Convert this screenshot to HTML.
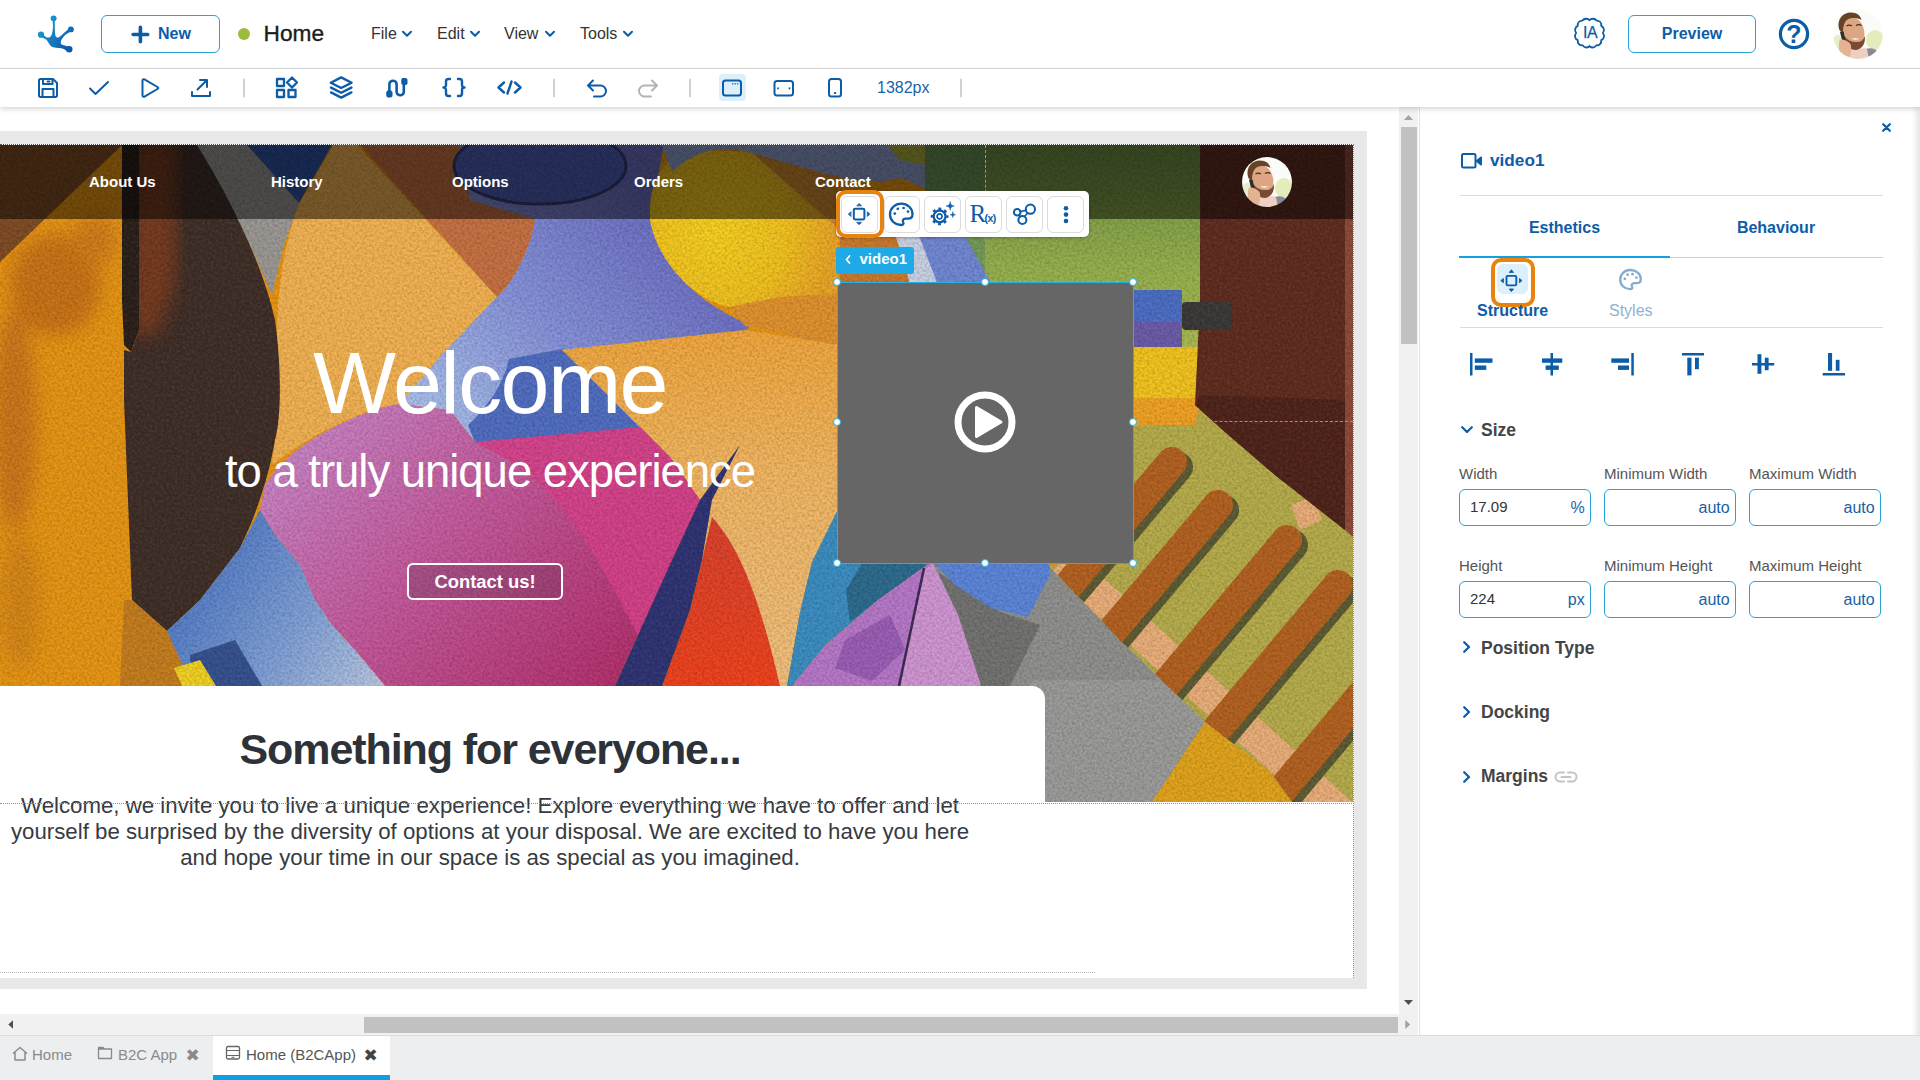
<!DOCTYPE html>
<html lang="en">
<head>
<meta charset="utf-8">
<title>Home (B2CApp)</title>
<style>
*{box-sizing:border-box;margin:0;padding:0}
html,body{width:1920px;height:1080px;overflow:hidden;background:#fff;font-family:"Liberation Sans",sans-serif;color:#333}
.abs{position:absolute}
#hdr{position:absolute;left:0;top:0;width:1920px;height:69px;background:#fff;border-bottom:1px solid #d9d9d9}
#tb{position:absolute;left:0;top:69px;width:1920px;height:38px;background:#fff;box-shadow:0 2px 5px rgba(0,0,0,.16);z-index:5}
.btn{position:absolute;border:1px solid #2aa3d6;border-radius:6px;background:#fff;color:#0d5ca8;font-weight:bold;font-size:16px;text-align:center}
.menu{position:absolute;top:24.700px;font-size:16px;color:#333;white-space:nowrap}
.ico{position:absolute;fill:none;stroke:#0d5ca8;stroke-width:2;stroke-linecap:round;stroke-linejoin:round;overflow:visible}
.sep{position:absolute;top:79px;width:2px;height:18px;background:#d4d4d4}
#work{position:absolute;left:0;top:107px;width:1399px;height:907px;background:#fff;overflow:hidden}
#vsb{position:absolute;left:1399px;top:107px;width:19px;height:907px;background:#f1f1f1}
#hsb{position:absolute;left:0;top:1014px;width:1418px;height:21px;background:#f1f1f1}
#panel{position:absolute;left:1419px;top:107px;width:501px;height:928px;background:#fff;border-left:1px solid #e2e2e2}
#tabs{position:absolute;left:0;top:1035px;width:1920px;height:45px;background:#edeef0;border-top:1px solid #dcdcdc}
.rf{font-family:"Liberation Sans",sans-serif}
</style>
</head>
<body>
<div id="hdr">
<svg class="abs" style="left:36px;top:14px" width="40" height="40" viewBox="0 0 40 40">
<defs><linearGradient id="lg" gradientUnits="userSpaceOnUse" x1="4" y1="10" x2="36" y2="34"><stop offset="0" stop-color="#1b9ad6"/><stop offset="1" stop-color="#0b58a6"/></linearGradient></defs>
<g fill="url(#lg)" stroke="none">
<circle cx="17.600" cy="4.350" r="2.950"/><circle cx="34.900" cy="15.400" r="2.950"/><circle cx="5" cy="20.700" r="3.100"/><circle cx="33.200" cy="35.200" r="3.300"/>
<path d="M16.600 6 C16.900 10 17 12 16.900 13.300 C16.800 16 16.500 18.500 15.900 20 C15.300 21.800 14.500 23 13.300 23.400 C12 23.800 11 23.500 9.900 22.900 L6.500 20 L5.500 23 L10.400 25.800 C11.500 27 12.300 28.500 13.300 30.100 C14.300 31.800 15.500 32.800 17.100 33.200 C19 33.800 21 34 22.900 34 C24.500 34 26 34.300 27.700 34.900 L32 37.500 L32.500 32.800 L27.200 31.100 C25.500 30.500 24.800 29.800 24.800 28.700 C24.700 27.500 25 26.400 25.800 25.300 C26.800 23.800 28 22.200 29.100 21 L34.500 17.500 L33 14.500 L29.600 17.600 C28 19 26.700 20.300 25.300 21.400 C24 22.500 22.800 23.600 21.400 23.600 C20.200 23.500 19.600 22.500 19.300 21 C18.900 18.500 18.800 16 18.800 13.300 L18.800 6 Z"/>
</g></svg>
<div class="btn" style="left:101px;top:15px;width:119px;height:38px;line-height:36px;text-align:left;padding-left:56px">New</div>
<svg class="abs" style="left:131px;top:25px" width="19" height="19" viewBox="0 0 19 19"><path d="M9.400 2.200 V16.800 M2.100 9.500 H16.700" stroke="#0d5ca8" stroke-width="3.600" stroke-linecap="round" fill="none"/></svg>
<div class="abs" style="left:238px;top:28px;width:12px;height:12px;border-radius:50%;background:#9dbc3c"></div>
<div class="abs" style="left:263.500px;top:19.500px;font-size:22.700px;line-height:26px;color:#1c1c1c;-webkit-text-stroke:.35px #1c1c1c">Home</div>
<div class="menu" style="left:371px">File</div><svg class="ico" style="left:402px;top:31px" width="10" height="6" viewBox="0 0 10 6"><path d="M1 .8 L5 4.8 L9 .8"/></svg>
<div class="menu" style="left:437px">Edit</div><svg class="ico" style="left:470px;top:31px" width="10" height="6" viewBox="0 0 10 6"><path d="M1 .8 L5 4.8 L9 .8"/></svg>
<div class="menu" style="left:504px">View</div><svg class="ico" style="left:545px;top:31px" width="10" height="6" viewBox="0 0 10 6"><path d="M1 .8 L5 4.8 L9 .8"/></svg>
<div class="menu" style="left:580px">Tools</div><svg class="ico" style="left:623px;top:31px" width="10" height="6" viewBox="0 0 10 6"><path d="M1 .8 L5 4.8 L9 .8"/></svg>
<!-- IA -->
<svg class="ico" style="left:1573px;top:17px;stroke-width:1.8" width="33" height="33" viewBox="0 0 33 33">
<path d="M16.5 3.2 C18 1.2 22 1.2 23.5 3.6 C26.5 3.4 28.8 5.8 28.2 8.8 C31 10 31.8 13.6 29.8 16 C32 18.4 31 22.2 28.2 23.2 C28.8 26.4 26.2 28.8 23.2 28.4 C21.8 31 18 31.2 16.5 29 C15 31.2 11.2 31 9.8 28.4 C6.8 28.8 4.2 26.4 4.8 23.2 C2 22.2 1 18.4 3.2 16 C1.2 13.6 2 10 4.8 8.8 C4.2 5.8 6.5 3.4 9.5 3.6 C11 1.2 15 1.2 16.5 3.2 Z"/>
</svg>
<div class="abs" style="left:1579px;top:24px;width:22px;text-align:center;font-size:16px;line-height:18px;color:#0d5ca8;letter-spacing:-.6px;-webkit-text-stroke:.25px #0d5ca8">IA</div>
<div class="btn" style="left:1628px;top:15px;width:128px;height:38px;line-height:36px">Preview</div>
<svg class="abs" style="left:1778px;top:18px" width="32" height="32" viewBox="0 0 32 32"><circle cx="16" cy="16" r="13.6" fill="none" stroke="#0d5ca8" stroke-width="3.2"/></svg>
<div class="abs" style="left:1778px;top:19.500px;width:32px;text-align:center;font-size:25px;line-height:28px;font-weight:bold;color:#0d5ca8">?</div>
<svg class="abs" style="left:1833px;top:9px" width="50" height="50" viewBox="0 0 50 50">
<defs><clipPath id="avc"><circle cx="25" cy="25" r="25"/></clipPath>
<filter id="avb"><feGaussianBlur stdDeviation=".7"/></filter>
<g id="avatar" clip-path="url(#avc)"><g filter="url(#avb)">
<rect width="50" height="50" fill="#fbfbf8"/>
<ellipse cx="42" cy="31" rx="9" ry="10" fill="#e4ecbc"/>
<ellipse cx="5" cy="33" rx="5" ry="7" fill="#e6edc8"/>
<path d="M18 40 L36 39 L38 50 L16 50 Z" fill="#ecd0c4"/>
<path d="M34 40 C39 38 44 40 46 45 L44 50 L36 50 Z" fill="#868c97"/>
<ellipse cx="20" cy="23.500" rx="11.300" ry="15.300" transform="rotate(-8 20 23.500)" fill="#dca684"/>
<path d="M11.500 27 C12 36 16 41 23 41 C29 40 32.500 35 32 27 C30 32 27 33.500 23 33 C18 33 14 31 11.500 27 Z" fill="#7a4a30"/>
<path d="M18 29.800 C20.500 28.800 24 28.800 26.500 29.800 C24.500 31.300 20.500 31.300 18 29.800 Z" fill="#f1e4dc"/>
<path d="M6 20 C3.500 10 10 3.500 18 3.500 C24 3.500 27.500 6.500 28.500 11 C24 8.500 18.500 8.500 14.500 10.500 C11 13 10 18 10 24 C8 23 6.800 22 6 20 Z" fill="#664228"/>
<path d="M13.500 17 C15 16 17.500 16 19 17 M23 16.500 C24.500 15.500 27 15.500 28.500 16.500" stroke="#4a2e1c" stroke-width="1.300" fill="none"/>
<path d="M7 23 L10.500 22.500 L13 33 L10 35 Z" fill="#2e2e2e"/>
<path d="M6.500 31 C9 29.500 14 31 17.500 35 C19 39 18 45 16 49 L6 47 C6 41 5.500 35 6.500 31 Z" fill="#e3b494"/>
</g></g></defs>
<use href="#avatar"/></svg>
</div>
<div id="tb"></div>
<div class="abs" style="left:0;top:69px;width:1920px;height:38px;z-index:6">
<!-- coords relative to page top: subtract 69 -->
<svg class="abs" style="left:0;top:0" width="980" height="38" viewBox="0 69 980 38" fill="none" stroke="#0d5ca8" stroke-width="2" stroke-linecap="round" stroke-linejoin="round">
<!-- save -->
<path d="M39 80.5 a1.5 1.5 0 0 1 1.500 -1.500 H53 L57 83 V95.500 a1.500 1.500 0 0 1 -1.500 1.500 H40.500 a1.500 1.500 0 0 1 -1.500 -1.500 Z"/>
<path d="M43 79 V84 H52.500 V79.500 M47.500 81.500 H49.500"/>
<path d="M42.500 97 V89 H53.500 V97"/>
<!-- check -->
<path d="M90 88.500 L95.500 94 L108 82"/>
<!-- play -->
<path d="M142.500 80.500 C142.500 79.300 143.500 78.800 144.500 79.400 L157.500 87 C158.500 87.600 158.500 88.400 157.500 89 L144.500 96.600 C143.500 97.200 142.500 96.700 142.500 95.500 Z"/>
<!-- export -->
<path d="M192 92 V96 H210 V92"/>
<path d="M197.500 89.500 L207 80 M200 80 H207 V87"/>
<!-- sep -->
<path d="M244 79.500 V96.500" stroke="#d0d0d0"/>
<!-- grid -->
<path d="M277 79 H284 V86 H277 Z M277 90 H284 V97 H277 Z M288.500 90 H295.500 V97 H288.500 Z M292 77.500 L297 82.500 L292 87.500 L287 82.500 Z" stroke-width="2.300"/>
<!-- layers -->
<path d="M341.200 77.400 L351.600 82.700 L341.200 88 L330.800 82.700 Z" stroke-width="2.400"/>
<path d="M331 87.600 L341.200 92.800 L351.400 87.600 M331 92.400 L341.200 97.600 L351.400 92.400" stroke-width="2.400"/>
<!-- route -->
<path d="M389.400 92 V84.300 a3.600 3.600 0 0 1 7.200 0 V91.700 a3.600 3.600 0 0 0 7.200 0 V84" stroke-width="2.600"/>
<rect x="386.800" y="91" width="5.200" height="6" rx="1.200" fill="#0d5ca8" stroke-width="1"/>
<rect x="401.800" y="78.500" width="5.200" height="6" rx="1.200" fill="#0d5ca8" stroke-width="1"/>
<!-- braces -->
<path d="M450 79 H448.500 a2.500 2.500 0 0 0 -2.500 2.500 V85 a2.500 2.500 0 0 1 -2.500 2.500 a2.500 2.500 0 0 1 2.500 2.500 V93.500 a2.500 2.500 0 0 0 2.500 2.500 H450" stroke-width="2.400"/>
<path d="M458 79 H459.500 a2.500 2.500 0 0 1 2.500 2.500 V85 a2.500 2.500 0 0 0 2.500 2.500 a2.500 2.500 0 0 0 -2.500 2.500 V93.500 a2.500 2.500 0 0 1 -2.500 2.500 H458" stroke-width="2.400"/>
<!-- code -->
<path d="M504 82.500 L498.500 87.500 L504 92.500 M515 82.500 L520.500 87.500 L515 92.500 M511.500 81.500 L507.500 93.500" stroke-width="2.400"/>
<path d="M554 79.500 V96.500" stroke="#d0d0d0"/>
<!-- undo -->
<path d="M593 80.500 L588 85.500 L593 90.500 M588.500 85.500 H600.500 a5.500 5.500 0 0 1 0 11 H594"/>
<!-- redo -->
<path d="M652 80.500 L657 85.500 L652 90.500 M656.500 85.500 H644.500 a5.500 5.500 0 0 0 0 11 H651" stroke="#b3b3b3"/>
<path d="M690 79.500 V96.500" stroke="#d0d0d0"/>
<!-- desktop -->
<rect x="719" y="74" width="27" height="27" rx="4" fill="#dceffa" stroke="none"/>
<rect x="723" y="80.500" width="18" height="15" rx="2.500"/>
<path d="M732.500 83.800 h.4 M735 83.800 h.4 M737.500 83.800 h.4" stroke-width="1.300"/>
<!-- tablet -->
<rect x="774.500" y="81" width="18.500" height="14.500" rx="2.500"/>
<path d="M778 88.200 v.3 M789.500 88.200 v.3" stroke-width="1.800"/>
<!-- phone -->
<rect x="829" y="79" width="12" height="17.500" rx="2.500"/>
<path d="M834.700 93 h.6" stroke-width="1.800"/>
<path d="M961 79.500 V96.500" stroke="#d0d0d0"/>
</svg>
<div class="abs" style="left:877px;top:9px;font-size:16px;line-height:20px;color:#1a63a8">1382px</div>
</div>
<div id="work">
<!-- page frame (coords relative to #work: page y - 107) -->
<div class="abs" style="left:0;top:24px;width:1367px;height:858px;background:#e8e8e8"></div>
<div class="abs" style="left:0;top:37px;width:1354px;height:834px;background:#fff"></div>
<svg class="abs" id="paint" style="left:0;top:38px" width="1353" height="657" viewBox="0 145 1353 657" preserveAspectRatio="none">
<defs>
<linearGradient id="gBrown" x1="139" y1="0" x2="185" y2="0" gradientUnits="userSpaceOnUse"><stop offset="0" stop-color="#6e3620"/><stop offset="1" stop-color="#3b2b25"/></linearGradient>
<linearGradient id="gRedBr" x1="139" y1="0" x2="196" y2="0" gradientUnits="userSpaceOnUse"><stop offset="0" stop-color="#7a3a1e"/><stop offset=".5" stop-color="#7a3a1e" stop-opacity=".7"/><stop offset="1" stop-color="#5a3020" stop-opacity="0"/></linearGradient>
<linearGradient id="gPink" x1="300" y1="420" x2="600" y2="700" gradientUnits="userSpaceOnUse"><stop offset="0" stop-color="#c884c6"/><stop offset=".45" stop-color="#c4589c"/><stop offset="1" stop-color="#b22e6c"/></linearGradient>
<linearGradient id="gBlueTri" x1="200" y1="560" x2="380" y2="680" gradientUnits="userSpaceOnUse"><stop offset="0" stop-color="#4f78c4"/><stop offset=".55" stop-color="#7f9fd6"/><stop offset="1" stop-color="#b4c4e0"/></linearGradient>
<linearGradient id="gPeach" x1="0" y1="330" x2="0" y2="686" gradientUnits="userSpaceOnUse"><stop offset="0" stop-color="#f0a53a"/><stop offset=".4" stop-color="#f1b560"/><stop offset="1" stop-color="#f0be7c"/></linearGradient>
<linearGradient id="gGreen" x1="0" y1="145" x2="0" y2="410" gradientUnits="userSpaceOnUse"><stop offset="0" stop-color="#68893f"/><stop offset=".45" stop-color="#93ae4b"/><stop offset="1" stop-color="#b9bf55"/></linearGradient>
<linearGradient id="gBlueFig" x1="650" y1="200" x2="420" y2="420" gradientUnits="userSpaceOnUse"><stop offset="0" stop-color="#6a6cc0"/><stop offset=".5" stop-color="#8490d8"/><stop offset="1" stop-color="#a9c0ea"/></linearGradient>
<linearGradient id="gRed" x1="0" y1="517" x2="0" y2="690" gradientUnits="userSpaceOnUse"><stop offset="0" stop-color="#d8402c"/><stop offset="1" stop-color="#f0401a"/></linearGradient>
<radialGradient id="gYel" cx="715" cy="230" r="120" gradientUnits="userSpaceOnUse"><stop offset="0" stop-color="#f6d01e"/><stop offset=".6" stop-color="#f0c01c"/><stop offset="1" stop-color="#e8a424"/></radialGradient>
<filter id="tex" x="0" y="0" width="100%" height="100%"><feTurbulence type="fractalNoise" baseFrequency=".4" numOctaves="2" seed="7"/><feColorMatrix type="matrix" values="0 0 0 0 0  0 0 0 0 0  0 0 0 0 0  1.1 0 0 0 -.38"/></filter>
<filter id="tex2" x="0" y="0" width="100%" height="100%"><feTurbulence type="fractalNoise" baseFrequency=".36" numOctaves="2" seed="23"/><feColorMatrix type="matrix" values="0 0 0 0 1  0 0 0 0 1  0 0 0 0 1  .9 0 0 0 -.36"/></filter>
<filter id="soft"><feGaussianBlur stdDeviation="9"/></filter>
<clipPath id="cLeaf"><path d="M139 145 L197 145 C225 190 262 260 275 320 C282 370 281 420 275 440 C268 480 256 515 240 548 L200 600 L167 631 L132 600 L124 400 L124 350 L131 352 L139 330 Z"/></clipPath>
<clipPath id="cStripes"><polygon points="1134,400 1353,400 1353,802 1292,802 1270,772 1205,722 1120,640 1050,567 1050,560 1134,560"/></clipPath>
</defs>
<rect x="0" y="145" width="1353" height="657" fill="#e69412"/>
<!-- left mottling -->
<g filter="url(#soft)" opacity=".6">
<ellipse cx="55" cy="285" rx="45" ry="50" fill="#b45a18"/>
<ellipse cx="14" cy="420" rx="22" ry="110" fill="#b8601a"/>
<ellipse cx="20" cy="600" rx="20" ry="70" fill="#c87a18"/>
<ellipse cx="95" cy="240" rx="22" ry="25" fill="#c06a1a"/>
</g>
<polygon points="0,145 122,145 0,262" fill="#7d4a22"/>
<!-- gray wedge + blue top -->
<polygon points="190,145 247,145 299,203 284,245 272,295 250,245 217,190" fill="#9a9692"/>
<polygon points="247,145 332,145 299,203" fill="#2c50a0"/>
<!-- centre orange lighter -->
<path d="M334 145 L299 204 C283 250 272 300 279 400 L272 465 C310 435 360 410 400 404 L444 352 L497 297 L357 145 Z" fill="#f1b050"/>
<!-- terracotta -->
<path d="M360 145 L470 145 L470 200 L535 205 L535 219 C530 250 515 280 497 297 Z" fill="#c46f40"/>
<!-- big brown shape -->
<polygon points="122,145 139,145 139,330 131,352 124,345 122,300" fill="#2a1e18"/>
<path d="M139 145 L197 145 C225 190 262 260 275 320 C282 370 281 420 275 440 C268 480 256 515 240 548 L200 600 L167 631 L132 600 L124 400 L124 350 L131 352 L139 330 Z" fill="#3e2d26"/>
<g clip-path="url(#cLeaf)"><polygon points="130,140 178,140 176,280 158,335 130,335" fill="#7a3a1e" filter="url(#soft)" opacity=".9"/></g>
<polygon points="132,600 167,631 192,686 120,686 124,600" fill="#c47c1c"/>
<!-- blue figure -->
<path d="M460 145 L664 145 L650 219 C655 250 680 295 750 325 L745 332 L562 350 L640 427 L600 432 L475 442 L450 410 L400 404 L444 352 L497 297 C515 280 530 250 535 219 L470 200 Z" fill="url(#gBlueFig)"/>
<path d="M562 349 L657 445 L484 466 L468 425 C490 405 505 380 509 359 Z" fill="#4f6cc0"/>
<ellipse cx="540" cy="166" rx="86" ry="38" fill="#4b5ab2" stroke="#2f376e" stroke-width="3"/>
<!-- light blue band top + yellow circle -->
<path d="M650 219 C648 180 665 152 700 150 L749 152 L838 150 L838 294 L780 297 L730 307 C690 300 655 255 650 219 Z" fill="url(#gYel)"/>
<polygon points="749,150 838,150 838,228" fill="#c8822c" opacity=".92"/>
<polygon points="730,307 780,297 838,294 838,352 780,332 745,326" fill="#df902c"/>
<path d="M662 145 L930 145 L930 190 L900 178 C860 190 800 165 740 150 C710 146 690 155 672 172 Z" fill="#8c9ccc"/>
<polygon points="887,145 930,145 930,166 900,160" fill="#a8a838"/>
<!-- green -->
<rect x="925" y="145" width="277" height="265" fill="url(#gGreen)"/>
<polygon points="925,145 985,145 985,290 925,290" fill="#5c8a5e" opacity=".55"/>
<polygon points="840,200 900,200 935,290 840,290" fill="#c8782a"/>
<polygon points="905,200 945,200 995,290 935,290" fill="#6f86d2"/>
<polygon points="885,200 905,200 940,290 912,290" fill="#c9d1e4"/>
<!-- right of video -->
<rect x="1134" y="347" width="66" height="63" fill="#f2c21c"/>
<rect x="1134" y="398" width="66" height="30" fill="#f0a122"/>
<rect x="1134" y="290" width="48" height="57" fill="#4a6cc4"/>
<rect x="1134" y="322" width="48" height="25" fill="#6a5aa8"/>
<!-- peach big -->
<path d="M562 350 L745 330 L840 345 L840 520 L812 562 L800 612 L787 686 L700 686 L700 500 L640 427 Z" fill="url(#gPeach)"/>
<!-- pink -->
<path d="M265 485 C280 462 300 445 325 432 C350 418 380 406 400 404 L450 410 L475 442 L600 432 L640 427 L670 457 L700 500 L672 560 L615 686 L385 686 L355 650 L332 625 L315 600 L300 565 L275 535 L260 510 Z" fill="url(#gPink)"/>
<path d="M475 442 L640 427 L670 457 L700 500 L672 560 L640 640 C600 560 560 490 512 462 Z" fill="#d6408a" opacity=".9"/>
<!-- blue triangle bottom-left -->
<path d="M260 510 L275 535 L300 565 L315 600 L332 625 L355 650 L385 686 L192 686 L167 631 L200 600 L240 548 Z" fill="url(#gBlueTri)"/>
<polygon points="190,655 235,640 262,686 192,686" fill="#34508e"/>
<polygon points="174,668 200,660 216,686 182,686" fill="#f0d020"/>
<!-- navy + red -->
<path d="M712 517 C737 545 757 587 780 686 L662 686 L690 610 L702 560 Z" fill="url(#gRed)"/>
<polygon points="740,445 712,500 702,560 690,610 662,686 615,686 672,560 700,500" fill="#2e3272"/>
<!-- gray concrete -->
<polygon points="928,563 1050,567 1120,640 1205,722 1152,802 960,802 978,686 955,615" fill="#8f8f8d"/>
<polygon points="938,572 958,615 981,686 1010,686 1040,625 1000,612" fill="#646464" opacity=".7"/>
<polygon points="1030,680 1164,680 1205,722 1152,802 1030,802" fill="#9a9a98"/>
<!-- teal + lilac -->
<polygon points="840,505 840,563 929.500,563 878,600 825,645.600 792,686 787,686 800,612 812,562" fill="#3a8cc0"/>
<polygon points="862,563 929.500,563 878,600 850,622 846,590" fill="#2b6a8c"/>
<polygon points="929.500,563 932.500,563 958,615 981,686 792,686 825,645.600 878,600" fill="#b676c8"/>
<polygon points="925,570 932.500,563 958,615 981,686 899,686" fill="#cf94d2"/>
<polygon points="845,640 890,615 905,650 872,681 835,668" fill="#9054ae" opacity=".75"/>
<path d="M924 568 L899 686" stroke="#3a2a50" stroke-width="2.500"/>
<polygon points="934,563 1049,563 1050,575 1027.700,617 991.500,608 955,585" fill="#5a84d8"/>
<!-- olive right -->
<polygon points="1134,425 1353,425 1353,802 1292,802 1270,772 1205,722 1120,640 1050,567 1060,563 1134,563" fill="#b5ab4a"/>
<polygon points="1134,410 1200,410 1353,540 1353,802 1300,802 1134,563" fill="#b5ab4a"/>
<g clip-path="url(#cStripes)">
<!-- peach band (under stripes) -->
<polygon points="1050.700,573.500 1072.100,549.700 1361.800,810.600 1340.400,834.400" fill="#e9ad78"/>
<!-- stripe shadows -->
<g stroke="#5b5a32" stroke-width="30" stroke-linecap="round" fill="none" transform="translate(6,3)">
<path d="M1172 464 L1000 669"/><path d="M1218 507 L1050 707"/><path d="M1287 542 L1100 765"/><path d="M1338 587 L1150 811"/><path d="M1406 644 L1230 854"/>
</g>
<!-- stripes -->
<g stroke="#b2601f" stroke-width="30" stroke-linecap="round" fill="none">
<path d="M1172 462 L1000 667"/><path d="M1218 505 L1050 705"/><path d="M1287 540 L1100 763"/><path d="M1338 585 L1150 809"/><path d="M1406 642 L1230 852"/>
</g>
<polygon points="1291,505 1312,497 1322,520 1300,530" fill="#e9ad78"/>
</g>
<polygon points="1205,722 1270,772 1292,802 1152,802" fill="#e0a21a"/>
<polygon points="1134,398 1200,398 1195,425 1134,425" fill="#f0a122"/>
<!-- brown band right -->
<polygon points="1200,145 1345,145 1345,530 1275,475 1225,432 1195,405 1200,300" fill="#5e2b1e"/>
<polygon points="1195,405 1225,432 1275,475 1345,530 1345,400 1200,395" fill="#4e2219"/>
<polygon points="1345,145 1353,145 1353,537 1345,530" fill="#8c4838"/>
<rect x="1182" y="302" width="50" height="28" rx="4" fill="#3a3836"/>
<!-- texture -->
<rect x="0" y="145" width="1353" height="657" filter="url(#tex)" opacity=".32"/>
<rect x="0" y="145" width="1353" height="657" filter="url(#tex2)" opacity=".16"/>
<!-- nav overlay -->
<rect x="0" y="145" width="1353" height="74" fill="#000" opacity=".5"/>
</svg>
<!-- overlays; coords relative to #work (page y-107) -->
<style>
.nav{position:absolute;top:66px;font-size:15px;line-height:18px;font-weight:bold;color:#fff;white-space:nowrap}
.hdl{position:absolute;width:8px;height:8px;border-radius:50%;background:#fff;border:1.5px solid #27b0e6}
.fbtn{position:absolute;top:89px;width:37px;height:37px;border:1px solid #dcdcdc;border-radius:6px;background:#fff}
</style>
<div class="nav" style="left:89px">About Us</div>
<div class="nav" style="left:271px">History</div>
<div class="nav" style="left:452px">Options</div>
<div class="nav" style="left:634px">Orders</div>
<div class="nav" style="left:815px">Contact</div>
<div class="abs" id="welcome" style="left:0;top:226.250px;width:980px;text-align:center;font-size:88px;letter-spacing:-1.600px;line-height:100px;color:#fff;white-space:nowrap">Welcome</div>
<div class="abs" id="sub" style="left:0;top:339.100px;width:980px;text-align:center;font-size:45.500px;letter-spacing:-1.030px;line-height:52px;color:#fff;white-space:nowrap">to a truly unique experience</div>
<div class="abs" id="cbtn" style="left:407px;top:456px;width:156px;height:37px;border:2px solid #fff;border-radius:6px;background:rgba(70,50,70,.22);color:#fff;font-weight:bold;font-size:18.4px;line-height:33px;text-align:center;white-space:nowrap">Contact us!</div>
<!-- white card -->
<div class="abs" style="left:0;top:579px;width:1045px;height:140px;background:#fff;border-top-right-radius:13px"></div>
<div class="abs" id="h2" style="left:0;top:617.850px;width:980px;text-align:center;font-size:43px;letter-spacing:-1.080px;line-height:48px;font-weight:bold;color:#2d3238;white-space:nowrap">Something for everyone...</div>
<div class="abs" id="para" style="left:0;top:686px;width:980px;text-align:center;font-size:22.25px;line-height:26px;color:#363b41;white-space:nowrap">Welcome, we invite you to live a unique experience! Explore everything we have to offer and let<br>yourself be surprised by the diversity of options at your disposal. We are excited to have you here<br>and hope your time in our space is as special as you imagined.</div>
<!-- dotted guides -->
<div class="abs" style="left:0;top:37px;width:1354px;height:0;border-top:1px dotted #555"></div>
<div class="abs" style="left:1353px;top:37px;width:0;height:834px;border-left:1px dotted #8a8a8a"></div>
<div class="abs" style="left:0;top:696px;width:1354px;height:0;border-top:1px dotted #8f8f8f"></div>
<div class="abs" style="left:0;top:865px;width:1095px;height:0;border-top:1px dotted #b5b5b5"></div>
<!-- cyan dashed guides -->
<div class="abs" style="left:985px;top:38px;width:0;height:137px;border-left:1px dashed #35b6e8"></div>
<div class="abs" style="left:1134px;top:314px;width:219px;height:0;border-top:1px dashed #35b6e8"></div>
<!-- nav avatar -->
<svg class="abs" style="left:1242px;top:50px" width="50" height="50" viewBox="0 0 50 50"><use href="#avatar"/></svg>
<!-- video box -->
<div class="abs" style="left:837px;top:175px;width:297px;height:282px;background:#666;border:1px solid #27b0e6"></div>
<svg class="abs" style="left:953px;top:283px" width="64" height="64" viewBox="0 0 64 64"><circle cx="32" cy="32" r="27" fill="none" stroke="#fff" stroke-width="7"/><path d="M23.500 17.500 L48 32 L23.500 46.500 Z" fill="#fff" stroke="#fff" stroke-width="3" stroke-linejoin="round"/></svg>
<div class="hdl" style="left:833px;top:171px"></div><div class="hdl" style="left:981px;top:171px"></div><div class="hdl" style="left:1129px;top:171px"></div>
<div class="hdl" style="left:833px;top:311px"></div><div class="hdl" style="left:1129px;top:311px"></div>
<div class="hdl" style="left:833px;top:452px"></div><div class="hdl" style="left:981px;top:452px"></div><div class="hdl" style="left:1129px;top:452px"></div>
<!-- label -->
<div class="abs" style="left:836px;top:140px;width:78px;height:27px;background:#1eaae6;border-radius:3px;color:#fff;font-weight:bold;font-size:15px;line-height:23px;padding-left:23.500px">video1</div>
<svg class="abs" style="left:845px;top:148px" width="6" height="9" viewBox="0 0 6 9"><path d="M4.500 1 L1.500 4.500 L4.500 8" fill="none" stroke="#fff" stroke-width="1.800" stroke-linecap="round" stroke-linejoin="round"/></svg>
<!-- floating toolbar -->
<div class="abs" style="left:836px;top:83.500px;width:253px;height:46.500px;background:#fff;border-radius:5px;box-shadow:0 1px 3px rgba(0,0,0,.28)"></div>
<div class="fbtn" style="left:841px"></div><div class="fbtn" style="left:883.500px;width:36px"></div><div class="fbtn" style="left:923.500px"></div><div class="fbtn" style="left:964.500px"></div><div class="fbtn" style="left:1005.500px"></div><div class="fbtn" style="left:1047px"></div>
<div class="abs" style="left:836px;top:83px;width:48px;height:48px;border:4px solid #e8830f;border-radius:10px"></div>
<svg class="abs" style="left:836px;top:83px" width="253" height="48" viewBox="836 190 253 48" fill="none" stroke="#0d5ca8" stroke-width="2" stroke-linecap="round" stroke-linejoin="round">
<!-- move -->
<rect x="853.800" y="208.800" width="10.600" height="10.600" rx="1.300"/>
<path d="M857 205.600 L859.100 203.500 L861.200 205.600 Z M857 222.600 L859.100 224.700 L861.200 222.600 Z M850.600 212 L848.500 214.100 L850.600 216.200 Z M867.600 212 L869.700 214.100 L867.600 216.200 Z" fill="#0d5ca8" stroke-width=".9"/>
<!-- palette -->
<path d="M901.300 203.600 C895 203.600 890 208.400 890 214.400 C890 220.600 895.200 225 901.200 225 C903.300 225 903.900 223.500 903.200 222.200 C902.200 220.400 903.200 218.600 905.400 218.600 L907.800 218.600 C910.600 218.600 912.500 216.800 912.500 214.200 C912.500 208.400 907.600 203.600 901.300 203.600 Z" stroke-width="2.300"/>
<g fill="#0d5ca8" stroke="none"><circle cx="894.800" cy="213.600" r="1.350"/><circle cx="897.800" cy="208.800" r="1.350"/><circle cx="903.600" cy="208" r="1.350"/><circle cx="908" cy="211.600" r="1.350"/></g>
<!-- gear + sparkles -->
<g transform="translate(939.600 216.400)"><circle r="7.500" stroke-width="2.800" stroke-dasharray="2.750 3.140" stroke-dashoffset="1.370" stroke-linecap="butt"/><circle r="5.900" stroke-width="2.300"/><circle r="2.500" stroke-width="1.700"/></g>
<path d="M950.200 201.800 C950.700 204.800 951.300 205.500 954.400 206 C951.300 206.500 950.700 207.200 950.200 210.200 C949.700 207.200 949.100 206.500 946 206 C949.100 205.500 949.700 204.800 950.200 201.800 Z M952.800 212 C953.100 214 953.500 214.400 955.600 214.800 C953.500 215.200 953.100 215.600 952.800 217.600 C952.500 215.600 952.100 215.200 950 214.800 C952.100 214.400 952.500 214 952.800 212 Z" fill="#0d5ca8" stroke-width=".5"/>
<!-- circles -->
<circle cx="1030.400" cy="209.200" r="4.600"/><circle cx="1017.200" cy="212.300" r="3.300"/><circle cx="1022.400" cy="220" r="4"/>
<path d="M1020.200 211.500 L1026 210.400 M1018.800 215.200 L1020.400 216.800 M1024.600 216.600 L1027.600 213" stroke-width="1.600"/>
<!-- dots -->
<g fill="#0d5ca8" stroke="none"><circle cx="1066" cy="208.200" r="2.300"/><circle cx="1066" cy="214.600" r="2.300"/><circle cx="1066" cy="221" r="2.300"/></g>
</svg>
<div class="abs" style="left:969.500px;top:93px;font-family:'Liberation Serif',serif;font-size:25px;line-height:28px;color:#0d5ca8;letter-spacing:-1px">R</div>
<div class="abs" style="left:984.500px;top:105px;font-size:10.500px;line-height:12px;color:#0d5ca8;font-weight:bold;letter-spacing:-.5px">(x)</div>
</div>
<div id="vsb">
<div class="abs" style="left:2px;top:20px;width:16px;height:217px;background:#c1c1c1"></div>
<svg class="abs" style="left:5px;top:8px" width="9" height="5" viewBox="0 0 9 5"><path d="M0 5 L4.500 0 L9 5 Z" fill="#a3a3a3"/></svg>
<svg class="abs" style="left:5px;top:893px" width="9" height="5" viewBox="0 0 9 5"><path d="M0 0 L4.500 5 L9 0 Z" fill="#505050"/></svg>
</div>
<div id="hsb">
<div class="abs" style="left:364px;top:2.500px;width:1034px;height:16px;background:#c1c1c1"></div>
<svg class="abs" style="left:7.500px;top:6px" width="5.500" height="9" viewBox="0 0 5 9"><path d="M5 0 L0 4.500 L5 9 Z" fill="#505050"/></svg>
<svg class="abs" style="left:1405px;top:6px" width="5.500" height="9" viewBox="0 0 5 9"><path d="M0 0 L5 4.500 L0 9 Z" fill="#a3a3a3"/></svg>
</div>
<style>
#panel .t{position:absolute;white-space:nowrap}
#panel .lbl{position:absolute;font-size:15px;line-height:18px;color:#555;white-space:nowrap}
#panel .inp{position:absolute;width:132px;height:37px;border:1px solid #2aa3d6;border-radius:6px;background:#fff}
#panel .val{position:absolute;margin-top:-.8px;font-size:15px;line-height:18px;color:#333}
#panel .unit{position:absolute;margin-top:.8px;margin-left:-1.300px;font-size:16px;line-height:18px;color:#1a5fa6;text-align:right;width:60px}
#panel .sec{position:absolute;margin-top:.7px;font-size:17.500px;line-height:20px;font-weight:bold;color:#434548;white-space:nowrap}
#panel .hr{position:absolute;left:40px;width:423px;height:1px;background:#dcdcdc}
</style>
<div id="panel">
<!-- coords relative to panel: x-1420, y-107 -->
<svg class="abs" style="left:462px;top:16px" width="9" height="9" viewBox="0 0 9 9"><path d="M1.200 1.200 L7.800 7.800 M7.800 1.200 L1.200 7.800" stroke="#0d5ca8" stroke-width="2.200" stroke-linecap="round"/></svg>
<svg class="abs" style="left:40px;top:44px" width="24" height="20" viewBox="0 0 24 20" fill="none" stroke="#0d5ca8" stroke-width="2" stroke-linejoin="round"><rect x="2" y="3" width="13.500" height="13.500" rx="1.500"/><path d="M17 9.800 L21 6.500 V13.500 L17 10.200 Z" fill="#0d5ca8"/></svg>
<div class="t" style="left:70px;top:43px;font-size:17.200px;line-height:20px;font-weight:bold;color:#0d5ca8">video1</div>
<div class="hr" style="top:88px"></div>
<div class="t" style="left:39px;top:110.500px;width:211px;text-align:center;font-size:16px;line-height:20px;font-weight:bold;color:#0d5ca8">Esthetics</div>
<div class="t" style="left:250px;top:110.500px;width:212px;text-align:center;font-size:16px;line-height:20px;font-weight:bold;color:#0d5ca8">Behaviour</div>
<div class="abs" style="left:39px;top:150px;width:424px;height:1px;background:#d0d0d0"></div>
<div class="abs" style="left:39.400px;top:148.700px;width:210.600px;height:2.200px;background:#12a0e2"></div>
<!-- structure -->
<div class="abs" style="left:70.600px;top:151px;width:44px;height:48.500px;border:4px solid #e8830f;border-radius:10px;background:#fff"></div>
<div class="abs" style="left:77px;top:156.700px;width:30.500px;height:30px;border-radius:6px;background:#dcf0fb"></div>
<svg class="abs" style="left:78px;top:160px" width="28" height="28" viewBox="1498 267 28 28" fill="none" stroke="#0d5ca8" stroke-width="1.900" stroke-linejoin="round"><rect x="1506.500" y="275.900" width="9.800" height="9.500" rx="1.200"/><path d="M1509.300 272.400 L1511.400 269.800 L1513.500 272.400 Z M1509.300 289 L1511.400 291.600 L1513.500 289 Z M1503.400 278.500 L1500.800 280.600 L1503.400 282.700 Z M1519.400 278.500 L1522 280.600 L1519.400 282.700 Z" fill="#0d5ca8" stroke-width=".9"/></svg>
<div class="t" style="left:57px;top:193.600px;font-size:16px;line-height:20px;font-weight:bold;color:#0d5ca8">Structure</div>
<svg class="abs" style="left:197.400px;top:159.500px" width="27" height="26" viewBox="0 0 27 26" fill="none" stroke="#86abce" stroke-width="2.300" stroke-linejoin="round"><path d="M13.300 3 C7.500 3 3.200 7.300 3.200 12.500 C3.200 18.300 7.800 22.200 13.200 22.200 C15.200 22.200 15.700 20.800 15 19.600 C14 17.900 15 16.200 17.200 16.200 L19.500 16.200 C22.200 16.200 23.800 14.600 23.800 12.200 C23.800 7 19.200 3 13.300 3 Z"/><circle cx="7.800" cy="11.800" r="1.400" fill="#86abce" stroke="none"/><circle cx="10.600" cy="7.700" r="1.400" fill="#86abce" stroke="none"/><circle cx="15.600" cy="7.200" r="1.400" fill="#86abce" stroke="none"/><circle cx="19.400" cy="10.600" r="1.400" fill="#86abce" stroke="none"/></svg>
<div class="t" style="left:189px;top:193.600px;font-size:16px;line-height:20px;color:#8fb2d4">Styles</div>
<div class="hr" style="top:220px"></div>
<!-- align icons -->
<svg class="abs" style="left:40px;top:240px" width="400" height="34" viewBox="1460 347 400 34" fill="#0d5ca8" stroke="none">
<rect x="1470" y="353" width="2.500" height="22.500"/><rect x="1474.800" y="358.400" width="17.700" height="4.400"/><rect x="1474.800" y="365.500" width="11.500" height="4.400"/>
<rect x="1550.500" y="353" width="2.500" height="22.500"/><rect x="1542" y="358.400" width="20.300" height="4.400"/><rect x="1545.600" y="365.500" width="13.200" height="4.400"/>
<rect x="1631.300" y="353" width="2.500" height="22.500"/><rect x="1611.300" y="358.400" width="17.700" height="4.400"/><rect x="1618" y="365.500" width="11" height="4.400"/>
<rect x="1682" y="353" width="22" height="2.500"/><rect x="1687.300" y="357.700" width="4.200" height="17.700"/><rect x="1695" y="357.700" width="3.900" height="11.500"/>
<rect x="1752" y="363" width="22.200" height="2.500"/><rect x="1757.500" y="354.200" width="3.900" height="19.600"/><rect x="1764.800" y="357.700" width="3.800" height="12.500"/>
<rect x="1822.700" y="373" width="22.300" height="2.500"/><rect x="1828" y="353" width="4.100" height="17.800"/><rect x="1835.800" y="359.800" width="3.700" height="11"/>
</svg>
<!-- Size -->
<svg class="abs" style="left:41px;top:319px" width="12" height="8" viewBox="0 0 12 8"><path d="M1.200 1.200 L6 6 L10.800 1.200" fill="none" stroke="#0d5ca8" stroke-width="2.200" stroke-linecap="round" stroke-linejoin="round"/></svg>
<div class="sec" style="left:61px;top:312px">Size</div>
<div class="lbl" style="left:39px;top:358px">Width</div><div class="lbl" style="left:184px;top:358px">Minimum Width</div><div class="lbl" style="left:329px;top:358px">Maximum Width</div>
<div class="inp" style="left:39px;top:382px"></div><div class="inp" style="left:184px;top:382px"></div><div class="inp" style="left:329px;top:382px"></div>
<div class="val" style="left:50px;top:392px">17.09</div><div class="unit" style="left:106px;top:391px">%</div><div class="unit" style="left:251px;top:391px">auto</div><div class="unit" style="left:396px;top:391px">auto</div>
<div class="lbl" style="left:39px;top:450px">Height</div><div class="lbl" style="left:184px;top:450px">Minimum Height</div><div class="lbl" style="left:329px;top:450px">Maximum Height</div>
<div class="inp" style="left:39px;top:474px"></div><div class="inp" style="left:184px;top:474px"></div><div class="inp" style="left:329px;top:474px"></div>
<div class="val" style="left:50px;top:484px">224</div><div class="unit" style="left:106px;top:483px">px</div><div class="unit" style="left:251px;top:483px">auto</div><div class="unit" style="left:396px;top:483px">auto</div>
<svg class="abs" style="left:43px;top:534px" width="8" height="12" viewBox="0 0 8 12"><path d="M1.200 1.200 L6 6 L1.200 10.800" fill="none" stroke="#0d5ca8" stroke-width="2.200" stroke-linecap="round" stroke-linejoin="round"/></svg>
<div class="sec" style="left:61px;top:530px">Position Type</div>
<svg class="abs" style="left:43px;top:599px" width="8" height="12" viewBox="0 0 8 12"><path d="M1.200 1.200 L6 6 L1.200 10.800" fill="none" stroke="#0d5ca8" stroke-width="2.200" stroke-linecap="round" stroke-linejoin="round"/></svg>
<div class="sec" style="left:61px;top:594.200px">Docking</div>
<svg class="abs" style="left:43px;top:664px" width="8" height="12" viewBox="0 0 8 12"><path d="M1.200 1.200 L6 6 L1.200 10.800" fill="none" stroke="#0d5ca8" stroke-width="2.200" stroke-linecap="round" stroke-linejoin="round"/></svg>
<div class="sec" style="left:61px;top:658.200px">Margins</div>
<svg class="abs" style="left:134px;top:664px" width="24" height="12" viewBox="0 0 24 12" fill="none" stroke="#c4c4c4" stroke-width="2" stroke-linecap="round"><path d="M10 1.500 H6 a4.500 4.500 0 0 0 0 9 H10 M14 1.500 H18 a4.500 4.500 0 0 1 0 9 H14 M7.500 6 H16.500"/></svg>
</div>
<div class="abs" style="left:1912px;top:107px;width:8px;height:928px;background:linear-gradient(90deg,rgba(0,0,0,0),rgba(0,0,0,.10))"></div>
<div id="tabs">
<div class="abs" style="left:213px;top:0;width:177px;height:46px;background:#fff"></div>
<div class="abs" style="left:213px;top:38.500px;width:177px;height:6.500px;background:#0e9fe0"></div>
<svg class="abs" style="left:11px;top:9px" width="18" height="18" viewBox="0 0 18 18" fill="none" stroke="#8a8a8a" stroke-width="1.500" stroke-linejoin="round"><path d="M2 8.500 L9 2.500 L16 8.500 M4 7 V15 H14 V7"/></svg>
<div class="abs" style="left:32px;top:10px;font-size:15px;line-height:18px;color:#8a8a8a">Home</div>
<svg class="abs" style="left:97px;top:10px" width="16" height="14" viewBox="0 0 16 14" fill="none" stroke="#8a8a8a" stroke-width="1.300" stroke-linejoin="round"><path d="M1.500 1.500 H6 L7.500 3 H14.500 V12.500 H1.500 Z M7.500 3 H1.500"/></svg>
<div class="abs" style="left:118px;top:10px;font-size:15px;line-height:18px;color:#8a8a8a">B2C App</div>
<div class="abs" style="left:185.500px;top:10px;font-size:17px;line-height:18px;color:#8a8a8a;font-family:'DejaVu Sans',sans-serif">✖</div>
<svg class="abs" style="left:225px;top:9px" width="16" height="16" viewBox="0 0 16 16" fill="none" stroke="#666" stroke-width="1.300" stroke-linejoin="round"><rect x="1.500" y="1.500" width="13" height="12.500" rx="1.500"/><path d="M1.500 5.500 H14.500 M1.500 10.500 H14.500 M6.500 12.300 H9.500" stroke-width="1.100"/></svg>
<div class="abs" style="left:246px;top:10px;font-size:15px;line-height:18px;color:#555">Home (B2CApp)</div>
<div class="abs" style="left:363.500px;top:10px;font-size:17px;line-height:18px;color:#444;font-family:'DejaVu Sans',sans-serif">✖</div>
</div>
</body>
</html>
